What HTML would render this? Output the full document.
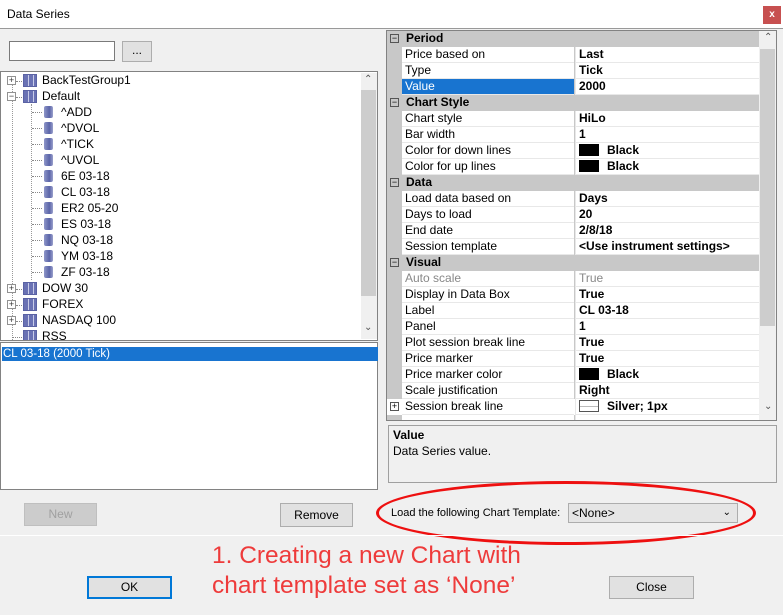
<!DOCTYPE html>
<html><head><meta charset="utf-8"><style>
*{box-sizing:border-box;margin:0;padding:0}
body{width:783px;height:615px;background:#f0f0f0;font-family:"Liberation Sans",Arial,sans-serif;font-size:12px;color:#000;position:relative;overflow:hidden}
.a{position:absolute}
.btn{position:absolute;background:#e1e1e1;border:1px solid #adadad;text-align:center;font-size:12px}
.tree .t{position:absolute;height:16px;line-height:16px;white-space:nowrap}
.ic{position:absolute;width:9px;height:12px;background:linear-gradient(90deg,#8e96c8,#5a64a8 60%,#9aa0cc);border-radius:2px}
.icg{position:absolute;width:14px;height:13px;background:repeating-linear-gradient(90deg,#6a72b4 0 4px,#c8cce8 4px 5px);border:1px solid #5a62a4}
.dl{position:absolute;width:10px;border-top:1px dotted #888}
.pm{position:absolute;width:9px;height:9px;border:1px solid #919191;background:#fff;font-size:9px;line-height:7px;text-align:center;color:#333}
.pg .row{position:absolute;left:0;width:372px;height:16px;line-height:15px}
.pg .h{background:#c8c8c8;font-weight:bold;padding-left:19px}
.pg .n{position:absolute;left:15px;width:172px;height:16px;background:#fff;border-bottom:1px solid #e8e8e8;padding-left:3px}
.pg .v{position:absolute;left:188px;width:184px;height:16px;background:#fff;border-bottom:1px solid #e8e8e8;border-left:1px solid #e8e8e8;padding-left:3px;font-weight:bold}
.sw{display:inline-block;width:20px;height:12px;background:#000;vertical-align:-2px;margin-right:8px}
.gp{position:absolute;left:3px;top:3px;width:9px;height:9px;border:1px solid #555;font-size:9px;line-height:6px;text-align:center;font-weight:normal}
</style></head><body>
<div class="a" style="left:0;top:0;width:783px;height:29px;background:#fff;border-bottom:1px solid #999"></div>
<div class="a" style="left:7px;top:7px;font-size:12px">Data Series</div>
<div class="a" style="left:763px;top:6px;width:18px;height:18px;background:#c75050;color:#fff;font-weight:bold;font-size:10px;text-align:center;line-height:17px">x</div>

<div class="a" style="left:9px;top:41px;width:106px;height:20px;background:#fff;border:1px solid #7a7a7a"></div>
<div class="btn" style="left:122px;top:41px;width:30px;height:21px;line-height:17px">...</div>

<div class="a tree" style="left:0;top:71px;width:378px;height:270px;background:#fff;border:1px solid #828282;overflow:hidden">
<div class="a" style="left:11px;top:8px;height:262px;border-left:1px dotted #999"></div>
<div class="a" style="left:30px;top:32px;height:176px;border-left:1px dotted #999"></div>
<div class="pm" style="left:6px;top:4px">+</div><div class="dl" style="left:15px;top:9px;width:6px"></div><div class="icg" style="left:22px;top:2px"></div><div class="t" style="left:41px;top:0">BackTestGroup1</div>
<div class="pm" style="left:6px;top:20px">−</div><div class="dl" style="left:15px;top:25px;width:6px"></div><div class="icg" style="left:22px;top:18px"></div><div class="t" style="left:41px;top:16px">Default</div>

<div class="dl" style="left:31px;top:40px"></div><div class="ic" style="left:43px;top:34px"></div><div class="t" style="left:60px;top:32px">^ADD</div>
<div class="dl" style="left:31px;top:56px"></div><div class="ic" style="left:43px;top:50px"></div><div class="t" style="left:60px;top:48px">^DVOL</div>
<div class="dl" style="left:31px;top:72px"></div><div class="ic" style="left:43px;top:66px"></div><div class="t" style="left:60px;top:64px">^TICK</div>
<div class="dl" style="left:31px;top:88px"></div><div class="ic" style="left:43px;top:82px"></div><div class="t" style="left:60px;top:80px">^UVOL</div>
<div class="dl" style="left:31px;top:104px"></div><div class="ic" style="left:43px;top:98px"></div><div class="t" style="left:60px;top:96px">6E 03-18</div>
<div class="dl" style="left:31px;top:120px"></div><div class="ic" style="left:43px;top:114px"></div><div class="t" style="left:60px;top:112px">CL 03-18</div>
<div class="dl" style="left:31px;top:136px"></div><div class="ic" style="left:43px;top:130px"></div><div class="t" style="left:60px;top:128px">ER2 05-20</div>
<div class="dl" style="left:31px;top:152px"></div><div class="ic" style="left:43px;top:146px"></div><div class="t" style="left:60px;top:144px">ES 03-18</div>
<div class="dl" style="left:31px;top:168px"></div><div class="ic" style="left:43px;top:162px"></div><div class="t" style="left:60px;top:160px">NQ 03-18</div>
<div class="dl" style="left:31px;top:184px"></div><div class="ic" style="left:43px;top:178px"></div><div class="t" style="left:60px;top:176px">YM 03-18</div>
<div class="dl" style="left:31px;top:200px"></div><div class="ic" style="left:43px;top:194px"></div><div class="t" style="left:60px;top:192px">ZF 03-18</div>

<div class="pm" style="left:6px;top:212px">+</div><div class="dl" style="left:15px;top:217px;width:6px"></div><div class="icg" style="left:22px;top:210px"></div><div class="t" style="left:41px;top:208px">DOW 30</div>
<div class="pm" style="left:6px;top:228px">+</div><div class="dl" style="left:15px;top:233px;width:6px"></div><div class="icg" style="left:22px;top:226px"></div><div class="t" style="left:41px;top:224px">FOREX</div>
<div class="pm" style="left:6px;top:244px">+</div><div class="dl" style="left:15px;top:249px;width:6px"></div><div class="icg" style="left:22px;top:242px"></div><div class="t" style="left:41px;top:240px">NASDAQ 100</div>
<div class="dl" style="left:11px;top:265px"></div><div class="icg" style="left:22px;top:258px"></div><div class="t" style="left:41px;top:256px">RSS</div>
<div class="a" style="left:360px;top:1px;width:16px;height:266px;background:#f0f0f0"></div>
<div class="a" style="left:360px;top:18px;width:15px;height:206px;background:#cdcdcd"></div>
<div class="a" style="left:363px;top:2px;font-size:10px;color:#555">⌃</div>
<div class="a" style="left:363px;top:250px;font-size:10px;color:#555">⌄</div>
</div>

<div class="a" style="left:0;top:342px;width:378px;height:148px;background:#fff;border:1px solid #828282">
<div class="a" style="left:1px;top:4px;width:376px;height:14px;background:#1874d0;color:#fff;line-height:14px;padding-left:1px;font-size:11.5px">CL 03-18 (2000 Tick)</div>
</div>

<div class="a pg" style="left:386px;top:30px;width:391px;height:391px;background:#c8c8c8;border:1px solid #828282;overflow:hidden">
<div class="row h" style="top:0"><span class="gp">−</span>Period</div>
<div class="row" style="top:16px"><div class="n">Price based on</div><div class="v">Last</div></div>
<div class="row" style="top:32px"><div class="n">Type</div><div class="v">Tick</div></div>
<div class="row" style="top:48px"><div class="n" style="background:#1874d0;color:#fff">Value</div><div class="v">2000</div></div>
<div class="row h" style="top:64px"><span class="gp">−</span>Chart Style</div>
<div class="row" style="top:80px"><div class="n">Chart style</div><div class="v">HiLo</div></div>
<div class="row" style="top:96px"><div class="n">Bar width</div><div class="v">1</div></div>
<div class="row" style="top:112px"><div class="n">Color for down lines</div><div class="v"><span class="sw"></span>Black</div></div>
<div class="row" style="top:128px"><div class="n">Color for up lines</div><div class="v"><span class="sw"></span>Black</div></div>
<div class="row h" style="top:144px"><span class="gp">−</span>Data</div>
<div class="row" style="top:160px"><div class="n">Load data based on</div><div class="v">Days</div></div>
<div class="row" style="top:176px"><div class="n">Days to load</div><div class="v">20</div></div>
<div class="row" style="top:192px"><div class="n">End date</div><div class="v">2/8/18</div></div>
<div class="row" style="top:208px"><div class="n">Session template</div><div class="v">&lt;Use instrument settings&gt;</div></div>
<div class="row h" style="top:224px"><span class="gp">−</span>Visual</div>
<div class="row" style="top:240px;color:#888"><div class="n">Auto scale</div><div class="v" style="font-weight:normal">True</div></div>
<div class="row" style="top:256px"><div class="n">Display in Data Box</div><div class="v">True</div></div>
<div class="row" style="top:272px"><div class="n">Label</div><div class="v">CL 03-18</div></div>
<div class="row" style="top:288px"><div class="n">Panel</div><div class="v">1</div></div>
<div class="row" style="top:304px"><div class="n">Plot session break line</div><div class="v">True</div></div>
<div class="row" style="top:320px"><div class="n">Price marker</div><div class="v">True</div></div>
<div class="row" style="top:336px"><div class="n">Price marker color</div><div class="v"><span class="sw"></span>Black</div></div>
<div class="row" style="top:352px"><div class="n">Scale justification</div><div class="v">Right</div></div>
<div class="row" style="top:368px;background:#fff"><span class="gp" style="background:#fff">+</span><div class="n">Session break line</div><div class="v"><span class="sw" style="background:#fff;border:1px solid #555;box-shadow:inset 0 5px 0 #fff,inset 0 6px 0 #bbb"></span>Silver; 1px</div></div>
<div class="row" style="top:384px"><div class="n"></div><div class="v"></div></div>
<div class="a" style="left:372px;top:0;width:18px;height:391px;background:#f0f0f0"></div>
<div class="a" style="left:373px;top:18px;width:15px;height:277px;background:#cdcdcd"></div>
<div class="a" style="left:377px;top:1px;font-size:10px;color:#555">⌃</div>
<div class="a" style="left:377px;top:370px;font-size:10px;color:#555">⌄</div>
</div>

<div class="a" style="left:388px;top:425px;width:389px;height:58px;border:1px solid #a0a0a0;background:#f0f0f0;padding:2px 4px">
<div style="font-weight:bold">Value</div><div style="margin-top:2px">Data Series value.</div></div>

<div class="btn" style="left:24px;top:503px;width:73px;height:23px;line-height:21px;color:#a0a0a0;background:#ccc;border-color:#bfbfbf">New</div>
<div class="btn" style="left:280px;top:503px;width:73px;height:24px;line-height:22px">Remove</div>
<div class="a" style="left:391px;top:507px;font-size:11px;white-space:nowrap">Load the following Chart Template:</div>
<div class="a" style="left:568px;top:503px;width:170px;height:20px;background:#e5e5e5;border:1px solid #adadad;line-height:18px;padding-left:3px">&lt;None&gt;<span style="position:absolute;right:6px;top:0;font-size:10px">⌄</span></div>
<div class="a" style="left:376px;top:481px;width:380px;height:64px;border:3px solid #ee1010;border-radius:50%"></div>
<div class="a" style="left:0;top:535px;width:783px;height:1px;background:#fff"></div>
<div class="a" style="left:212px;top:541px;color:#ee3b3b;font-size:24px;line-height:30px;white-space:nowrap;transform:scaleX(1.02);transform-origin:left">1. Creating a new Chart with<br>chart template set as ‘None’</div>
<div class="btn" style="left:87px;top:576px;width:85px;height:23px;line-height:19px;border:2px solid #0078d7">OK</div>
<div class="btn" style="left:609px;top:576px;width:85px;height:23px;line-height:21px">Close</div>
</body></html>
